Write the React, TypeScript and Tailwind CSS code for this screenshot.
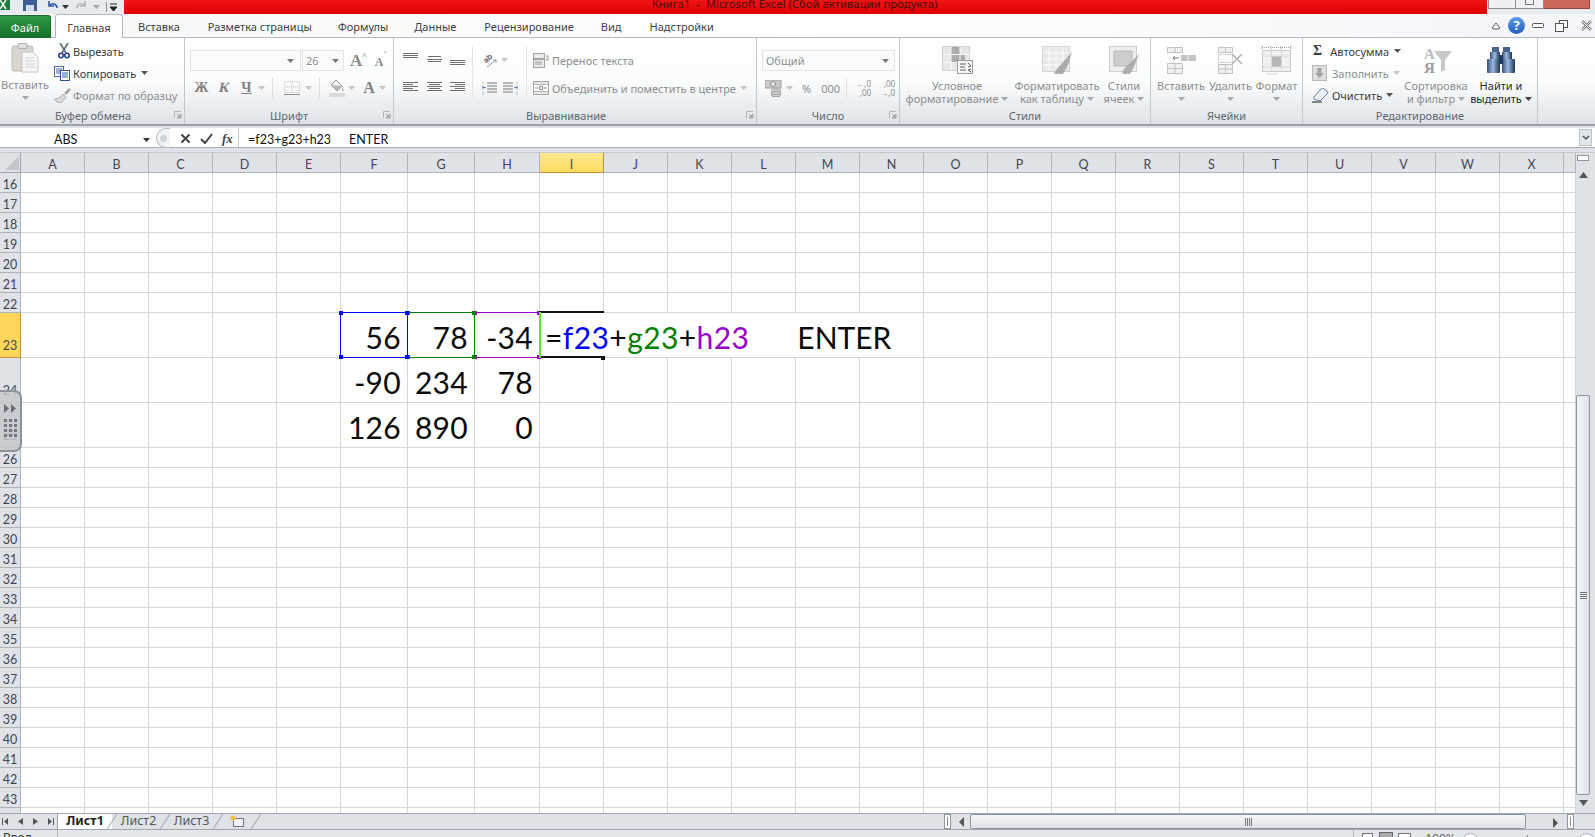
import type { ReactNode } from 'react';

const columns = ['A', 'B', 'C', 'D', 'E', 'F', 'G', 'H', 'I', 'J', 'K', 'L', 'M', 'N', 'O', 'P', 'Q', 'R', 'S', 'T', 'U', 'V', 'W', 'X', ''];
const rows = Array.from({ length: 29 }, (_, i) => i + 16);
const values: Record<number, Record<string, string>> = {
  23: { F: '56', G: '78', H: '-34' },
  24: { F: '-90', G: '234', H: '78' },
  25: { F: '126', G: '890', H: '0' },
};
const refs: Record<string, { color: string; z: string }> = {
  F: { color: '#0000ff', z: 'z-[14]' },
  G: { color: '#008000', z: 'z-[12]' },
  H: { color: '#9900cc', z: 'z-[10]' },
};

function Caret({ color = '#a8a8a8', className = '' }: { color?: string; className?: string }) {
  return (
    <svg width="7" height="4" viewBox="0 0 7 4" className={`inline-block shrink-0 ${className}`}>
      <path d="M0 0h7L3.5 4z" fill={color} />
    </svg>
  );
}

function Launcher() {
  return (
    <svg width="8" height="8" viewBox="0 0 8 8" className="shrink-0">
      <path d="M.5 7V.5H7" stroke="#b5b5b5" fill="none" />
      <path d="M3 3l3 3M7 3v4H3z" stroke="#a0a0a0" fill="#c8c8c8" />
    </svg>
  );
}

function Group({ width, label, launcher, labelClass = 'justify-center', children }: { width: string; label: string; launcher?: boolean; labelClass?: string; children: ReactNode }) {
  return (
    <div className={`${width} shrink-0 flex flex-col border-r border-[#c3c7cc] h-full`}>
      <div className="h-[70px] shrink-0 flex">{children}</div>
      <div className={`h-[14px] flex items-center relative text-[#5f6770] ${labelClass}`}>
        <span>{label}</span>
        {launcher && (
          <span className="absolute right-[2px] top-[3px]">
            <Launcher />
          </span>
        )}
      </div>
    </div>
  );
}

function BigButton({ width, icon, lines, arrow, tone = 'text-[#8d8d8d]', caretColor }: { width: string; icon: ReactNode; lines: string[]; arrow?: 'inline' | 'below'; tone?: string; caretColor?: string }) {
  return (
    <div className={`${width} shrink-0 flex flex-col items-center pt-[7px] leading-[13px] ${tone}`}>
      <div className="h-[30px] flex items-center justify-center mb-[4px]">{icon}</div>
      <span className="whitespace-nowrap">{lines[0]}</span>
      {lines[1] ? (
        <span className="whitespace-nowrap flex items-center gap-[3px]">
          {lines[1]}
          {arrow === 'inline' && <Caret color={caretColor} />}
        </span>
      ) : (
        <span className="h-[13px] flex items-center">{arrow === 'below' && <Caret />}</span>
      )}
    </div>
  );
}

function LineIcon({ rows: lineRows, h = 12 }: { rows: [number, number, number][]; h?: number }) {
  return (
    <svg width="15" height={h} viewBox={`0 0 15 ${h}`} className="shrink-0">
      {lineRows.map(([x, y, w], i) => (
        <rect key={i} x={x} y={y} width={w} height="1" fill="#6f6f6f" />
      ))}
    </svg>
  );
}

function PasteIcon() {
  return (
    <svg width="28" height="30" viewBox="0 0 28 30">
      <rect x="1" y="3" width="21" height="25" rx="2" fill="#d9d6d2" stroke="#bdbab6" />
      <rect x="7" y="0.5" width="9" height="5" rx="1" fill="#e0e0e0" stroke="#b0b0b0" />
      <path d="M11 9h11l5 5v15H11z" fill="#f6f6f6" stroke="#c6c6c6" />
      <path d="M14 15h9M14 18h10M14 21h10M14 24h10" stroke="#d0d0d0" />
    </svg>
  );
}

function ScissorsIcon() {
  return (
    <svg width="12" height="16" viewBox="0 0 12 16">
      <path d="M2 0l6 10M10 0L4 10" stroke="#5f6b7a" strokeWidth="1.6" fill="none" />
      <circle cx="3" cy="12.5" r="2.2" fill="none" stroke="#27408f" strokeWidth="1.6" />
      <circle cx="9" cy="12.5" r="2.2" fill="none" stroke="#27408f" strokeWidth="1.6" />
    </svg>
  );
}

function CopyIcon() {
  return (
    <svg width="16" height="15" viewBox="0 0 16 15">
      <rect x="0.5" y="0.5" width="9" height="10" fill="#fff" stroke="#4e6a9c" />
      <path d="M2 3h6M2 5h6M2 7h4" stroke="#3f66ad" />
      <rect x="6.5" y="4.5" width="9" height="10" fill="#fff" stroke="#32508a" />
      <path d="M8 7h6M8 9h6M8 11h6" stroke="#2f5fb5" />
    </svg>
  );
}

function BrushIcon() {
  return (
    <svg width="17" height="15" viewBox="0 0 17 15">
      <path d="M10 5l5-5 2 2-5 5z" fill="#a6a6a6" />
      <path d="M1 11c4 0 6-3 8-5l3 3c-2 3-4 5-6 6-2 0-4-1-5-4z" fill="#d8d8d4" stroke="#ababab" />
    </svg>
  );
}

function BordersIcon() {
  return (
    <svg width="18" height="16" viewBox="0 0 18 16">
      <rect x="1.5" y="1.5" width="15" height="11" fill="none" stroke="#c0c0c0" strokeDasharray="1 1" />
      <path d="M9 2v10M2 7h14" stroke="#c0c0c0" strokeDasharray="1 1" />
      <path d="M1 14.5h16" stroke="#8f8f8f" />
    </svg>
  );
}

function FillIcon() {
  return (
    <svg width="16" height="18" viewBox="0 0 16 18">
      <path d="M7 1l6 6-5 5-6-6z" fill="#f2f2f2" stroke="#8f8f8f" />
      <path d="M2 6l11 1-5 5z" fill="#b9b9b9" />
      <path d="M13 8c1 2 2 3 1.5 4s-2 0-1.5-4z" fill="#a9a9a9" />
      <rect x="0" y="14" width="16" height="4" fill="#d9d9d9" />
    </svg>
  );
}

function OrientIcon() {
  return (
    <svg width="17" height="16" viewBox="0 0 17 16">
      <text x="2" y="10" fontSize="8" fontWeight="700" fontFamily="Liberation Sans, sans-serif" fill="#666" transform="rotate(-45 5 8)">ab</text>
      <path d="M5 15l9-7M11 8h3v3" stroke="#9a9a9a" fill="none" />
    </svg>
  );
}

function IndentIcon({ flip }: { flip?: boolean }) {
  return (
    <svg width="15" height="13" viewBox="0 0 15 13" className={flip ? '-scale-x-100' : ''}>
      <path d="M5 1h10M5 4h10M5 7h10M5 10h10" stroke="#757575" />
      <path d="M4 5.5H0M2 3.5l-2 2 2 2" stroke="#6d87a8" fill="none" />
      <path d="M1 0v1M1 10v3" stroke="#8a8a8a" strokeDasharray="1 1" />
    </svg>
  );
}

function WrapIcon() {
  return (
    <svg width="16" height="15" viewBox="0 0 16 15">
      <rect x="0.5" y="0.5" width="11" height="5" fill="#eaeaea" stroke="#a3a3a3" />
      <rect x="0.5" y="6.5" width="11" height="8" fill="#eaeaea" stroke="#a3a3a3" />
      <path d="M2 9h7M2 11h7M13 3h2v4h-2M13 7l1.500-1" stroke="#9a9a9a" fill="none" />
    </svg>
  );
}

function MergeIcon() {
  return (
    <svg width="16" height="14" viewBox="0 0 16 14">
      <rect x="0.5" y="0.5" width="15" height="13" fill="#e6e6e6" stroke="#a9a9a9" />
      <path d="M1 3.500h14M1 10.500h14" stroke="#b5b5b5" />
      <rect x="1" y="4" width="14" height="6" fill="#fff" />
      <path d="M2 7h3M11 7h3" stroke="#8b8b8b" />
      <circle cx="8" cy="7" r="1.800" fill="none" stroke="#7c7c7c" />
    </svg>
  );
}

function CurrencyIcon() {
  return (
    <svg width="18" height="17" viewBox="0 0 18 17">
      <rect x="0" y="0" width="16" height="8" fill="#c9c9c9" stroke="#a0a0a0" />
      <circle cx="8" cy="4" r="2.500" fill="#e8e8e8" stroke="#8e8e8e" />
      <ellipse cx="11" cy="10.500" rx="5" ry="1.500" fill="#d6d6d6" stroke="#9f9f9f" />
      <ellipse cx="11" cy="13" rx="5" ry="1.500" fill="#d6d6d6" stroke="#9f9f9f" />
      <ellipse cx="11" cy="15.500" rx="5" ry="1.200" fill="#d6d6d6" stroke="#9f9f9f" />
    </svg>
  );
}

function ConditionalIcon() {
  return (
    <svg width="31" height="28" viewBox="0 0 31 28">
      <rect x="0.5" y="0.500" width="27" height="24" fill="#e8e8e8" stroke="#cfcfcf" />
      <rect x="9" y="1" width="9" height="12" fill="#ababab" />
      <rect x="9" y="9" width="14" height="7" fill="#ababab" />
      <path d="M9 1v24M18 1v24M1 8.500h27M1 16.500h27" stroke="#fafafa" />
      <rect x="15.500" y="14.500" width="15" height="13" fill="#f7f7f7" stroke="#9c9c9c" />
      <path d="M18 18h6M18 21h5M18 24h6M26 17l3 3-3 1M29 23l-3 1 3 2" stroke="#5f5f5f" fill="none" />
    </svg>
  );
}

function TableBrushIcon() {
  return (
    <svg width="31" height="28" viewBox="0 0 31 28">
      <rect x="0.500" y="0.500" width="27" height="25" fill="#e9e9e9" stroke="#d4d4d4" />
      <path d="M7 1v24M14 1v24M21 1v24M1 7h27M1 13h27M1 19h27" stroke="#fbfbfb" />
      <path d="M30 6L14 24l-2 4h9l5-9z" fill="#a0a0a0" opacity="0.85" />
    </svg>
  );
}

function CellStyleIcon() {
  return (
    <svg width="31" height="28" viewBox="0 0 31 28">
      <rect x="0.500" y="0.500" width="27" height="25" fill="#eeeeee" stroke="#cfcfcf" />
      <rect x="5" y="5" width="18" height="15" fill="#cdcdcd" stroke="#b8b8b8" />
      <path d="M30 8L15 23l-2 5h8l4-7z" fill="#a4a4a4" opacity="0.85" />
    </svg>
  );
}

function InsertCellsIcon() {
  return (
    <svg width="31" height="28" viewBox="0 0 31 28">
      <path d="M1.500 1.500h15v5h-15zM1.500 6.500h15M9 1.500v5M1.500 17.500h15v10h-15zM1.500 22.500h15M9 17.500v10" fill="#f0f0f0" stroke="#c2c2c2" />
      <rect x="15" y="9" width="15" height="6" fill="#c4c4c4" />
      <path d="M22 9v6" stroke="#efefef" />
      <path d="M13 12H7M9 10l-2 2 2 2" stroke="#777" fill="none" />
    </svg>
  );
}

function DeleteCellsIcon() {
  return (
    <svg width="26" height="28" viewBox="0 0 26 28">
      <path d="M0.500 1.500h14v5h-14zM7.500 1.500v5M0.500 18.500h14v9h-14zM0.500 23h14M7.500 18.500v9" fill="#f0f0f0" stroke="#c2c2c2" />
      <rect x="0.500" y="8.500" width="14" height="8" fill="#fafafa" stroke="#adadad" strokeDasharray="1 1" />
      <path d="M14 8l10 10M24 8L14 18" stroke="#b5b5b5" strokeWidth="1.500" />
    </svg>
  );
}

function FormatCellsIcon() {
  return (
    <svg width="31" height="30" viewBox="0 0 31 30">
      <path d="M1 1v3M1 2.500h29M30 1v3M10 1v3M20 1v3" stroke="#9f9f9f" strokeDasharray="1 1" fill="none" />
      <rect x="1.500" y="5.500" width="28" height="21" fill="#f1f1f1" stroke="#c9c9c9" />
      <rect x="11" y="11" width="9" height="11" fill="#b5b5b5" />
      <path d="M10.500 6v20M20.500 6v20M2 11h27M2 22h27M6 26v3h10v-3" stroke="#dadada" fill="none" />
    </svg>
  );
}

function FillDownIcon() {
  return (
    <svg width="15" height="16" viewBox="0 0 15 16">
      <rect x="0.500" y="0.500" width="14" height="15" fill="#dedede" stroke="#bababa" />
      <path d="M5.500 3h4v5H12l-4.500 5L3 8h2.500z" fill="#a2a2a2" />
    </svg>
  );
}

function EraserIcon() {
  return (
    <svg width="17" height="15" viewBox="0 0 17 15">
      <path d="M2 9l7-8c1-1 2-1 3 0l3 2c1 1 1 2 0 3l-6 6c-1 1-3 1-4 0L2 11c-1-.5-.5-1.500 0-2z" fill="#eef2f6" stroke="#5f7ea3" />
      <path d="M0 14h10" stroke="#222" />
    </svg>
  );
}

function SortIcon() {
  return (
    <svg width="31" height="29" viewBox="0 0 31 29">
      <path d="M13 5h18l-7 9v10l-4 2V14z" fill="#c9c9c9" />
      <text x="3" y="13" fontSize="15" fontWeight="700" fontFamily="Liberation Serif, serif" fill="#bcbcbc">A</text>
      <text x="3" y="27" fontSize="15" fontWeight="700" fontFamily="Liberation Serif, serif" fill="#9a9a9a">Я</text>
    </svg>
  );
}

function BinocularsIcon() {
  return (
    <svg width="28" height="27" viewBox="0 0 28 27">
      <defs>
        <linearGradient id="bino" x1="0" y1="0" x2="1" y2="0">
          <stop offset="0" stopColor="#2f4f80" />
          <stop offset="0.45" stopColor="#9db8d9" />
          <stop offset="1" stopColor="#1c3559" />
        </linearGradient>
      </defs>
      <rect x="5" y="0" width="7" height="6" fill="#46638f" />
      <rect x="16" y="0" width="7" height="6" fill="#46638f" />
      <rect x="3" y="5" width="10" height="8" fill="url(#bino)" />
      <rect x="15" y="5" width="10" height="8" fill="url(#bino)" />
      <rect x="0" y="12" width="13" height="14" rx="1" fill="url(#bino)" />
      <rect x="15" y="12" width="13" height="14" rx="1" fill="url(#bino)" />
      <rect x="12" y="8" width="4" height="9" fill="#203a60" />
    </svg>
  );
}

function TitleBar() {
  return (
    <div className="h-[14px] shrink-0 flex bg-[#e7ebf0] overflow-hidden">
      <div className="w-[124px] shrink-0 flex items-center">
        <svg width="10" height="14" viewBox="0 0 10 14" className="shrink-0">
          <rect x="-2" y="-3" width="12" height="13" fill="#1e7d3c" />
          <path d="M0 0l6 9M6 0L0 9" stroke="#fff" strokeWidth="1.500" />
        </svg>
        <svg width="15" height="14" viewBox="0 0 15 14" className="ml-[13px] shrink-0">
          <rect x="0" y="-3" width="14" height="14" fill="#3e5f96" />
          <rect x="3" y="5" width="8" height="6" fill="#d4dbe6" />
        </svg>
        <svg width="11" height="12" viewBox="0 0 11 12" className="ml-[9px] shrink-0">
          <path d="M2 0v5h5M2 5c3-4 8-2 8 2" stroke="#2f5ea6" strokeWidth="1.600" fill="none" />
        </svg>
        <Caret color="#333" className="ml-[4px]" />
        <svg width="12" height="12" viewBox="0 0 12 12" className="ml-[6px] shrink-0">
          <path d="M10 0v5H5M10 5C7 1 2 3 2 7" stroke="#b7b7b7" strokeWidth="1.600" fill="none" />
        </svg>
        <Caret color="#a7a7a7" className="ml-[6px]" />
        <div className="ml-[6px] w-px h-[10px] bg-[#8f8f8f]" />
        <svg width="7" height="9" viewBox="0 0 7 9" className="ml-[3px] shrink-0">
          <path d="M0 1h7M0 4h7l-3.500 4z" stroke="#222" fill="#222" />
        </svg>
      </div>
      <div className="flex-1 bg-gradient-to-b from-[#f21414] to-[#dd0000] flex justify-center -mr-[1px]">
        <span className="text-[#4a0b0b] text-[11.300px] leading-[8px] whitespace-nowrap -translate-x-[11px]">Книга1 &nbsp;-&nbsp; Microsoft Excel (Сбой активации продукта)</span>
      </div>
      <div className="w-[109px] shrink-0 flex items-start pl-[2px]">
        <div className="w-[28px] h-[9px] bg-[#eef0f3] border border-t-0 border-[#8e8e8e]" />
        <div className="w-[28px] h-[9px] bg-[#eef0f3] border border-t-0 border-l-0 border-[#8e8e8e] flex justify-center">
          <div className="w-[9px] h-[5px] border border-t-0 border-[#777]" />
        </div>
        <div className="w-[46px] h-[9px] bg-[#c9675a] border border-t-0 border-l-0 border-[#8e4a40]" />
      </div>
    </div>
  );
}

function TabRow() {
  const tabs = [
    { label: 'Вставка', ml: 'ml-[15px]' },
    { label: 'Разметка страницы', ml: 'ml-[28px]' },
    { label: 'Формулы', ml: 'ml-[26px]' },
    { label: 'Данные', ml: 'ml-[26px]' },
    { label: 'Рецензирование', ml: 'ml-[28px]' },
    { label: 'Вид', ml: 'ml-[27px]' },
    { label: 'Надстройки', ml: 'ml-[28px]' },
  ];
  return (
    <div className="h-[24px] shrink-0 flex items-end bg-gradient-to-r from-[#f4f6f8] via-[#ffffff] to-[#f3f5f8] border-b border-[#b6babf] text-[#3f3f3f]">
      <div className="w-[51px] h-[23px] -mb-px pt-[2px] rounded-tr-[3px] bg-gradient-to-b from-[#2f9a45] to-[#14702c] text-white flex items-center justify-center border border-l-0 border-[#1a6b2d]">Файл</div>
      <div className="ml-[4px] w-[68px] h-[24px] -mb-px pt-[2px] bg-white border border-b-0 border-[#b6babf] rounded-t-[3px] flex items-center justify-center">Главная</div>
      {tabs.map((tab) => (
        <span key={tab.label} className={`${tab.ml} h-[23px] pt-[2px] flex items-center whitespace-nowrap`}>
          {tab.label}
        </span>
      ))}
      <div className="ml-auto h-[23px] flex items-center pr-[3px] gap-[7px]">
        <svg width="10" height="8" viewBox="0 0 10 8">
          <path d="M1 6l4-5 4 5-2 1H3z" fill="none" stroke="#555" />
        </svg>
        <div className="w-[17px] h-[17px] rounded-full bg-gradient-to-b from-[#5c9be6] to-[#1f5fc0] text-white text-[13px] font-bold flex items-center justify-center">?</div>
        <svg width="12" height="6" viewBox="0 0 12 6">
          <rect x="0.500" y="0.500" width="11" height="4" rx="1" fill="#fff" stroke="#555" />
        </svg>
        <svg width="13" height="12" viewBox="0 0 13 12" className="ml-[4px]">
          <rect x="4.500" y="0.500" width="8" height="7" fill="#fff" stroke="#555" />
          <rect x="0.500" y="3.500" width="8" height="8" fill="#fff" stroke="#555" />
        </svg>
        <svg width="11" height="11" viewBox="0 0 11 11" className="ml-[6px]">
          <path d="M1 1l9 9M10 1l-9 9" stroke="#777" strokeWidth="2.500" />
          <path d="M1 1l9 9M10 1l-9 9" stroke="#fff" strokeWidth="1" />
        </svg>
      </div>
    </div>
  );
}

function Ribbon() {
  return (
    <div className="h-[88px] shrink-0 flex bg-gradient-to-b from-[#ffffff] via-[#fbfcfc] to-[#dfe3e8] border-b-2 border-[#9da3aa] text-[#8e8e8e]">
      <Group width="w-[185px]" label="Буфер обмена" launcher labelClass="pl-[2px] justify-center">
        <div className="w-[50px] shrink-0 flex flex-col items-center pt-[5px] leading-[13px]">
          <div className="h-[31px]">
            <PasteIcon />
          </div>
          <span className="mt-[4px]">Вставить</span>
          <Caret className="mt-[5px]" />
        </div>
        <div className="flex flex-col pt-[2px] pl-[4px] text-[#3c3c3c]">
          <div className="h-[22px] flex items-center">
            <span className="w-[19px] flex justify-center pl-[1px]">
              <ScissorsIcon />
            </span>
            <span>Вырезать</span>
          </div>
          <div className="h-[22px] flex items-center">
            <span className="w-[19px]">
              <CopyIcon />
            </span>
            <span>Копировать</span>
            <Caret color="#555" className="ml-[5px]" />
          </div>
          <div className="h-[22px] flex items-center text-[#8e8e8e]">
            <span className="w-[19px]">
              <BrushIcon />
            </span>
            <span>Формат по образцу</span>
          </div>
        </div>
      </Group>

      <Group width="w-[209px]" label="Шрифт" launcher>
        <div className="flex flex-col pt-[12px] pl-[5px]">
          <div className="h-[21px] flex items-center">
            <div className="w-[111px] h-[21px] border border-[#e1e4e8] bg-[#fbfbfc] flex items-center justify-end pr-[6px]">
              <Caret color="#777" />
            </div>
            <div className="ml-px w-[42px] h-[21px] border border-[#e1e4e8] bg-[#fbfbfc] flex items-center justify-between pl-[3px] pr-[4px]">
              26
              <Caret color="#777" />
            </div>
            <span className="ml-[6px] font-['Liberation_Serif',serif] font-bold text-[17px] leading-none text-[#8a8a8a]">A</span>
            <span className="text-[8px] -mt-[10px] leading-none">^</span>
            <span className="ml-[8px] font-['Liberation_Serif',serif] font-bold text-[12px] leading-none mt-[2px] text-[#8a8a8a]">A</span>
            <span className="text-[8px] -mt-[10px] leading-none">ˇ</span>
          </div>
          <div className="mt-[6px] h-[22px] flex items-center font-['Liberation_Serif',serif] font-bold text-[14px] text-[#808080]">
            <span className="w-[15px] ml-[4px] text-center">Ж</span>
            <span className="ml-[10px] w-[10px] text-center -skew-x-12">К</span>
            <span className="ml-[12px] w-[11px] text-center underline">Ч</span>
            <Caret color="#c4c4c4" className="ml-[6px]" />
            <div className="ml-[7px] w-px h-[20px] bg-[#e0e0e0]" />
            <span className="ml-[10px]">
              <BordersIcon />
            </span>
            <Caret color="#c4c4c4" className="ml-[4px]" />
            <div className="ml-[7px] w-px h-[20px] bg-[#e0e0e0]" />
            <span className="ml-[9px]">
              <FillIcon />
            </span>
            <Caret color="#c4c4c4" className="ml-[3px]" />
            <span className="ml-[8px] w-[12px] text-center text-[16px]">A</span>
            <Caret color="#c4c4c4" className="ml-[4px]" />
          </div>
        </div>
      </Group>

      <Group width="w-[363px]" label="Выравнивание" launcher labelClass="justify-start pl-[132px]">
        <div className="flex flex-col pl-[9px] pt-[11px]">
          <div className="h-[22px] flex items-start">
            <span className="mt-[4px]">
              <LineIcon rows={[[0, 0, 15], [0, 2, 15], [0, 4, 15]]} />
            </span>
            <span className="ml-[9px] mt-[7px]">
              <LineIcon rows={[[1, 0, 13], [0, 3, 15], [1, 5, 13]]} />
            </span>
            <span className="ml-[8px] mt-[11px]">
              <LineIcon rows={[[0, 0, 15], [0, 2, 15], [0, 4, 15]]} />
            </span>
          </div>
          <div className="mt-[6px] h-[22px] flex items-center">
            <LineIcon rows={[[0, 0, 15], [0, 2, 10], [0, 4, 15], [0, 6, 10], [0, 8, 15]]} />
            <span className="ml-[9px]">
              <LineIcon rows={[[0, 0, 15], [2, 2, 11], [0, 4, 15], [2, 6, 11], [0, 8, 15]]} />
            </span>
            <span className="ml-[8px]">
              <LineIcon rows={[[0, 0, 15], [5, 2, 10], [0, 4, 15], [5, 6, 10], [0, 8, 15]]} />
            </span>
          </div>
        </div>
        <div className="ml-[7px] mt-[8px] w-px h-[52px] bg-[#e4e4e4]" />
        <div className="flex flex-col pl-[9px] pt-[11px]">
          <div className="h-[22px] flex items-center">
            <OrientIcon />
            <Caret color="#c4c4c4" className="ml-[2px]" />
          </div>
          <div className="mt-[6px] h-[22px] flex items-center">
            <IndentIcon />
            <span className="ml-[6px]">
              <IndentIcon flip />
            </span>
          </div>
        </div>
        <div className="ml-[8px] mt-[8px] w-px h-[52px] bg-[#e4e4e4]" />
        <div className="flex flex-col pl-[6px] pt-[11px]">
          <div className="h-[22px] flex items-center">
            <WrapIcon />
            <span className="ml-[3px]">Перенос текста</span>
          </div>
          <div className="mt-[6px] h-[22px] flex items-center">
            <MergeIcon />
            <span className="ml-[3px]">Объединить и поместить в центре</span>
            <Caret color="#c4c4c4" className="ml-[4px]" />
          </div>
        </div>
      </Group>

      <Group width="w-[143px]" label="Число" launcher>
        <div className="flex flex-col pl-[5px] pt-[12px]">
          <div className="w-[133px] h-[21px] border border-[#e1e4e8] bg-[#fbfbfc] flex items-center justify-between pl-[3px] pr-[5px]">
            Общий
            <Caret color="#777" />
          </div>
          <div className="mt-[6px] h-[22px] flex items-center pl-[3px]">
            <CurrencyIcon />
            <Caret color="#c4c4c4" className="ml-[3px]" />
            <span className="ml-[9px]">%</span>
            <span className="ml-[10px] text-[11px]">000</span>
            <div className="ml-[6px] w-px h-[20px] bg-[#e0e0e0]" />
            <div className="ml-[8px] w-[16px] text-[8px] leading-[9px] text-right">←,0<br />,00</div>
            <div className="ml-[8px] w-[16px] text-[8px] leading-[9px] text-right">,00<br />→,0</div>
          </div>
        </div>
      </Group>

      <Group width="w-[251px]" label="Стили">
        <BigButton width="w-[108px] pl-[6px]" icon={<ConditionalIcon />} lines={['Условное', 'форматирование']} arrow="inline" />
        <BigButton width="w-[92px] ml-[3px]" icon={<TableBrushIcon />} lines={['Форматировать', 'как таблицу']} arrow="inline" />
        <BigButton width="w-[42px]" icon={<CellStyleIcon />} lines={['Стили', 'ячеек']} arrow="inline" />
      </Group>

      <Group width="w-[152px]" label="Ячейки">
        <BigButton width="w-[50px] ml-[5px]" icon={<InsertCellsIcon />} lines={['Вставить']} arrow="below" />
        <BigButton width="w-[47px] ml-[1px]" icon={<DeleteCellsIcon />} lines={['Удалить']} arrow="below" />
        <BigButton width="w-[43px] ml-[1px]" icon={<FormatCellsIcon />} lines={['Формат']} arrow="below" />
      </Group>

      <Group width="w-[235px]" label="Редактирование">
        <div className="w-[98px] shrink-0 flex flex-col pl-[9px] pt-[2px] text-[#3c3c3c]">
          <div className="h-[22px] flex items-center">
            <span className="w-[20px] pl-[1px] font-['Liberation_Serif',serif] font-bold text-[14px]">Σ</span>
            <span>Автосумма</span>
            <Caret color="#555" className="ml-[5px]" />
          </div>
          <div className="h-[22px] flex items-center text-[#8e8e8e]">
            <span className="w-[20px]">
              <FillDownIcon />
            </span>
            <span>Заполнить</span>
            <Caret color="#c4c4c4" className="ml-[4px]" />
          </div>
          <div className="h-[22px] flex items-center">
            <span className="w-[20px]">
              <EraserIcon />
            </span>
            <span>Очистить</span>
            <Caret color="#555" className="ml-[4px]" />
          </div>
        </div>
        <BigButton width="w-[70px]" icon={<SortIcon />} lines={['Сортировка', 'и фильтр']} arrow="inline" />
        <BigButton width="w-[60px]" icon={<BinocularsIcon />} lines={['Найти и', 'выделить']} arrow="inline" tone="text-[#2b2b2b]" caretColor="#444" />
      </Group>
    </div>
  );
}

function FormulaBar() {
  return (
    <div className="h-[27px] shrink-0 pt-[2px] pb-[4px] flex bg-[#dfe3e9] border-b border-[#c5c9ce] font-['Lato',sans-serif] text-[12.500px] text-[#111]">
      <div className="flex-1 flex bg-white border-b border-[#a9aeb4]">
        <div className="w-[152px] shrink-0 flex items-center justify-between pl-[54px] pr-[2px] pt-[5px]">
          ABS
          <Caret color="#333" />
        </div>
        <div className="w-[87px] shrink-0 flex items-center border-r border-[#c5c9ce] pt-[1px]">
          <div className="ml-[4px] w-[14px] h-[20px] rounded-l-full border border-r-0 border-[#b9bdc3] bg-[#f2f3f5] flex items-center justify-center">
            <div className="w-[7px] h-[7px] rounded-full bg-[#cfd2d6]" />
          </div>
          <svg width="11" height="11" viewBox="0 0 11 11" className="ml-[10px]">
            <path d="M1.500 1.500l8 8M9.500 1.500l-8 8" stroke="#444" strokeWidth="2" />
          </svg>
          <svg width="13" height="11" viewBox="0 0 13 11" className="ml-[9px]">
            <path d="M1 6l4 4 7-9" stroke="#444" strokeWidth="2" fill="none" />
          </svg>
          <span className="ml-[9px] font-['Liberation_Serif',serif] italic font-bold text-[13px] text-[#444]">fx</span>
        </div>
        <div className="flex-1 flex items-center pl-[9px] pt-[5px] whitespace-pre">
          =f23+g23+h23
          <span className="ml-[18px]">ENTER</span>
        </div>
        <div className="w-[13px] mr-[3px] my-[1px] border border-[#bfc3c8] bg-[#e3e6ea] flex items-center justify-center">
          <svg width="8" height="6" viewBox="0 0 8 6">
            <path d="M1 1l3 3 3-3" stroke="#555" strokeWidth="1.500" fill="none" />
          </svg>
        </div>
      </div>
    </div>
  );
}

function RefBox({ color, z }: { color: string; z: string }) {
  return (
    <div className={`absolute -left-px -top-px right-[-1px] bottom-[-1px] border pointer-events-none ${z}`} style={{ borderColor: color }}>
      <i className="absolute -left-[2px] -top-[2px] w-[4px] h-[4px]" style={{ background: color }} />
      <i className="absolute -right-[2px] -top-[2px] w-[4px] h-[4px]" style={{ background: color }} />
      <i className="absolute -left-[2px] -bottom-[2px] w-[4px] h-[4px]" style={{ background: color }} />
      <i className="absolute -right-[2px] -bottom-[2px] w-[4px] h-[4px]" style={{ background: color }} />
    </div>
  );
}

function Sheet() {
  return (
    <div className="flex-1 min-w-0 overflow-hidden grid content-start grid-cols-[21px_repeat(5,64px)_67px_67px_65px_repeat(16,64px)_12px] font-['Lato',sans-serif]">
      <div className="h-[20px] bg-[#dfe3e8] border-r border-b border-[#9ea4ab] flex items-end justify-end">
        <svg width="14" height="14" viewBox="0 0 14 14" className="mr-[1px] mb-[2px]">
          <path d="M14 0v14H0z" fill="#c3c7cc" />
        </svg>
      </div>
      {columns.map((col, i) => (
        <div
          key={i}
          className={`h-[20px] pt-[5px] flex items-center justify-center text-[12.500px] border-b border-r ${
            col === 'I' ? 'bg-gradient-to-b from-[#ffe98f] to-[#ffdb5e] border-[#c8923a] text-[#4a4a4a]' : 'bg-[#dfe3e8] border-[#aeb3b9] text-[#3f4650]'
          }`}
        >
          {col}
        </div>
      ))}
      {rows.map((row) => {
        const big = row >= 23 && row <= 25;
        return [
          <div
            key={`h${row}`}
            className={`${big ? 'h-[45px] items-end pb-[5px]' : 'h-[20px] items-center pt-[6px]'} flex justify-center text-[12.500px] border-r border-b ${
              row === 23 ? 'bg-[#ffd65c] border-[#c8923a] text-[#4a4a4a]' : 'bg-[#dfe3e8] border-[#aeb3b9] text-[#3f4650]'
            }`}
          >
            {row === 44 ? '' : row}
          </div>,
          ...columns.map((col, i) => {
            const value = values[row]?.[col];
            const noRight = row === 23 && ['I', 'J', 'K', 'L', 'M'].includes(col);
            return (
              <div
                key={`${row}-${i}`}
                className={`${big ? 'h-[45px] pt-[4px]' : 'h-[20px]'} relative border-b border-[#d6d6d6] ${noRight ? '' : 'border-r'} flex items-center justify-end pr-[6px] text-[30px] tracking-[0.3px] leading-none text-[#0b0b0b]`}
              >
                {value}
                {row === 23 && refs[col] && <RefBox color={refs[col].color} z={refs[col].z} />}
                {row === 23 && col === 'I' && (
                  <>
                    <div className="absolute -left-[1px] -top-[2px] right-0 -bottom-[1px] border-t-2 border-b-2 border-[#111] z-[16]" />
                    <div className="absolute -left-[1px] -top-[1px] -bottom-[1px] w-[2px] bg-[#66e033] z-20" />
                    <div className="absolute -right-[1px] -bottom-[3px] w-[4px] h-[4px] bg-[#111] z-20" />
                    <span className="absolute left-[5px] top-[4px] bottom-0 flex items-center whitespace-nowrap z-20 tracking-[0.4px]">
                      =<span className="text-[#0000ff]">f23</span>+<span className="text-[#008000]">g23</span>+<span className="text-[#9900cc]">h23</span>
                      <span className="ml-[48px] tracking-normal">ENTER</span>
                    </span>
                  </>
                )}
              </div>
            );
          }),
        ];
      })}
    </div>
  );
}

function VScroll() {
  return (
    <div className="w-[19px] shrink-0 pr-[5px] bg-[#dfe3e8] flex flex-col items-stretch">
      <div className="mt-[2px] h-[6px] mx-[1px] border border-[#8e959c] bg-white" />
      <div className="h-[22px] flex items-center justify-center pt-[6px]">
        <svg width="9" height="6" viewBox="0 0 9 6">
          <path d="M0 6h9L4.500 0z" fill="#555" />
        </svg>
      </div>
      <div className="mt-[212px] h-[400px] border border-[#8e959c] rounded-[2px] bg-gradient-to-r from-[#f3f4f7] to-[#dfe2e8] flex items-center justify-center">
        <svg width="7" height="7" viewBox="0 0 7 7">
          <path d="M0 .5h7M0 2.500h7M0 4.500h7M0 6.500h7" stroke="#777" />
        </svg>
      </div>
      <div className="h-[15px] flex items-center justify-center">
        <svg width="9" height="6" viewBox="0 0 9 6">
          <path d="M0 0h9L4.500 6z" fill="#555" />
        </svg>
      </div>
    </div>
  );
}

function Splitter() {
  return (
    <div className="w-[7px] h-[15px] border border-[#8e959c] bg-white flex items-center justify-center">
      <div className="w-px h-[9px] bg-[#888]" />
    </div>
  );
}

function SheetTab({ label, active }: { label: string; active?: boolean }) {
  return (
    <div className={`flex items-center h-full ${active ? 'w-[54px] bg-white font-bold justify-center text-[#222]' : 'w-[53px] justify-center text-[#555]'}`}>
      {label}
    </div>
  );
}

function Slash() {
  return (
    <svg width="10" height="16" viewBox="0 0 10 16" className="shrink-0 -mx-[5px]">
      <path d="M0 15L10 0" stroke="#9aa0a7" fill="none" />
    </svg>
  );
}

function BottomTabs() {
  return (
    <div className="h-[17px] shrink-0 flex items-center bg-[#dfe3e8] border-t border-b border-[#a0a6ad] text-[12.500px] font-['Noto_Sans',sans-serif]">
      <div className="w-[58px] shrink-0 h-full flex items-center border-r border-[#a0a6ad] pl-[2px] gap-[8px]">
        <svg width="6" height="7" viewBox="0 0 6 7"><path d="M0 0h1v7H0zM6 0v7L2 3.500z" fill="#555" /></svg>
        <svg width="5" height="7" viewBox="0 0 5 7" className="ml-[2px]"><path d="M5 0v7L0 3.500z" fill="#555" /></svg>
        <svg width="5" height="7" viewBox="0 0 5 7" className="ml-[2px]"><path d="M0 0v7l5-3.500z" fill="#555" /></svg>
        <svg width="6" height="7" viewBox="0 0 6 7" className="ml-[2px]"><path d="M0 0v7l4-3.500zM5 0h1v7H5z" fill="#555" /></svg>
      </div>
      <div className="w-[886px] shrink-0 h-full flex items-center">
        <SheetTab label="Лист1" active />
        <Slash />
        <SheetTab label="Лист2" />
        <Slash />
        <SheetTab label="Лист3" />
        <Slash />
        <div className="w-[38px] h-full flex items-center justify-center">
          <svg width="15" height="13" viewBox="0 0 15 13">
            <rect x="3.500" y="3.500" width="10" height="8" fill="#eef1f5" stroke="#6d7580" />
            <circle cx="3" cy="3" r="2.500" fill="#f2c23f" />
          </svg>
        </div>
        <Slash />
      </div>
      <Splitter />
      <div className="w-[18px] flex justify-center ml-[1px]">
        <svg width="5" height="10" viewBox="0 0 5 10"><path d="M5 0v10L0 5z" fill="#555" /></svg>
      </div>
      <div className="w-[556px] h-full shrink-0 border border-[#8e959c] rounded-[2px] bg-gradient-to-b from-[#f3f4f7] to-[#dfe2e8] flex items-center justify-center">
        <svg width="7" height="8" viewBox="0 0 7 8">
          <path d="M.5 0v8M2.500 0v8M4.500 0v8M6.500 0v8" stroke="#777" />
        </svg>
      </div>
      <div className="flex-1 flex justify-end pr-[3px]">
        <svg width="5" height="10" viewBox="0 0 5 10" className="mr-[6px] mt-[2px]"><path d="M0 0v10l5-5z" fill="#555" /></svg>
      </div>
      <Splitter />
      <div className="w-[21px]" />
    </div>
  );
}

function StatusBar() {
  return (
    <div className="h-[7px] shrink-0 overflow-hidden flex items-start bg-[#e3e6eb] text-[12px] text-[#333]">
      <div className="w-[58px] shrink-0 h-full border-r border-[#b4b8be] pl-[3px] pt-[2px] leading-[12px]">Ввод</div>
      <div className="ml-[1295px] h-full w-px bg-[#b4b8be]" />
      <div className="ml-[8px] mt-[3px] w-[12px] h-[12px] border border-[#777] bg-white" />
      <div className="ml-[6px] mt-[2px] w-[14px] h-[12px] border border-[#666] bg-[#aaa]" />
      <div className="ml-[5px] mt-[3px] w-[14px] h-[12px] border border-[#777] bg-white" />
      <span className="ml-[14px] mt-[3px] text-[#666] leading-[12px]">100%</span>
      <div className="ml-[6px] mt-[3px] w-[18px] h-[18px] rounded-full border border-[#aab] bg-white" />
      <div className="ml-[48px] mt-[5px] w-px h-[4px] bg-[#888]" />
      <div className="ml-[50px] mt-[3px] w-[18px] h-[18px] rounded-full border border-[#aab] bg-white" />
    </div>
  );
}

export default function App() {
  return (
    <div className="relative w-[1595px] h-[837px] overflow-hidden flex flex-col bg-white font-['Noto_Sans',sans-serif] text-[11px] leading-none">
      <TitleBar />
      <TabRow />
      <Ribbon />
      <FormulaBar />
      <div className="h-[660px] shrink-0 flex overflow-hidden">
        <Sheet />
        <VScroll />
      </div>
      <BottomTabs />
      <StatusBar />
      {/* плавающая панель рукописного ввода поверх заголовков строк */}
      <div className="absolute left-0 top-[390px] w-[22px] h-[62px] rounded-r-[8px] border-2 border-l-0 border-[#8f9399] bg-[#c5c9ce]/85 flex flex-col items-center pt-[12px] gap-[6px]">
        <svg width="13" height="9" viewBox="0 0 13 9">
          <path d="M0 0v9l5-4.500zM7 0v9l5-4.500z" fill="#6b6f75" />
        </svg>
        <div className="grid grid-cols-3 gap-[2px]">
          {Array.from({ length: 12 }, (_, i) => (
            <i key={i} className="w-[3px] h-[3px] bg-[#74787e]" />
          ))}
        </div>
      </div>
    </div>
  );
}
